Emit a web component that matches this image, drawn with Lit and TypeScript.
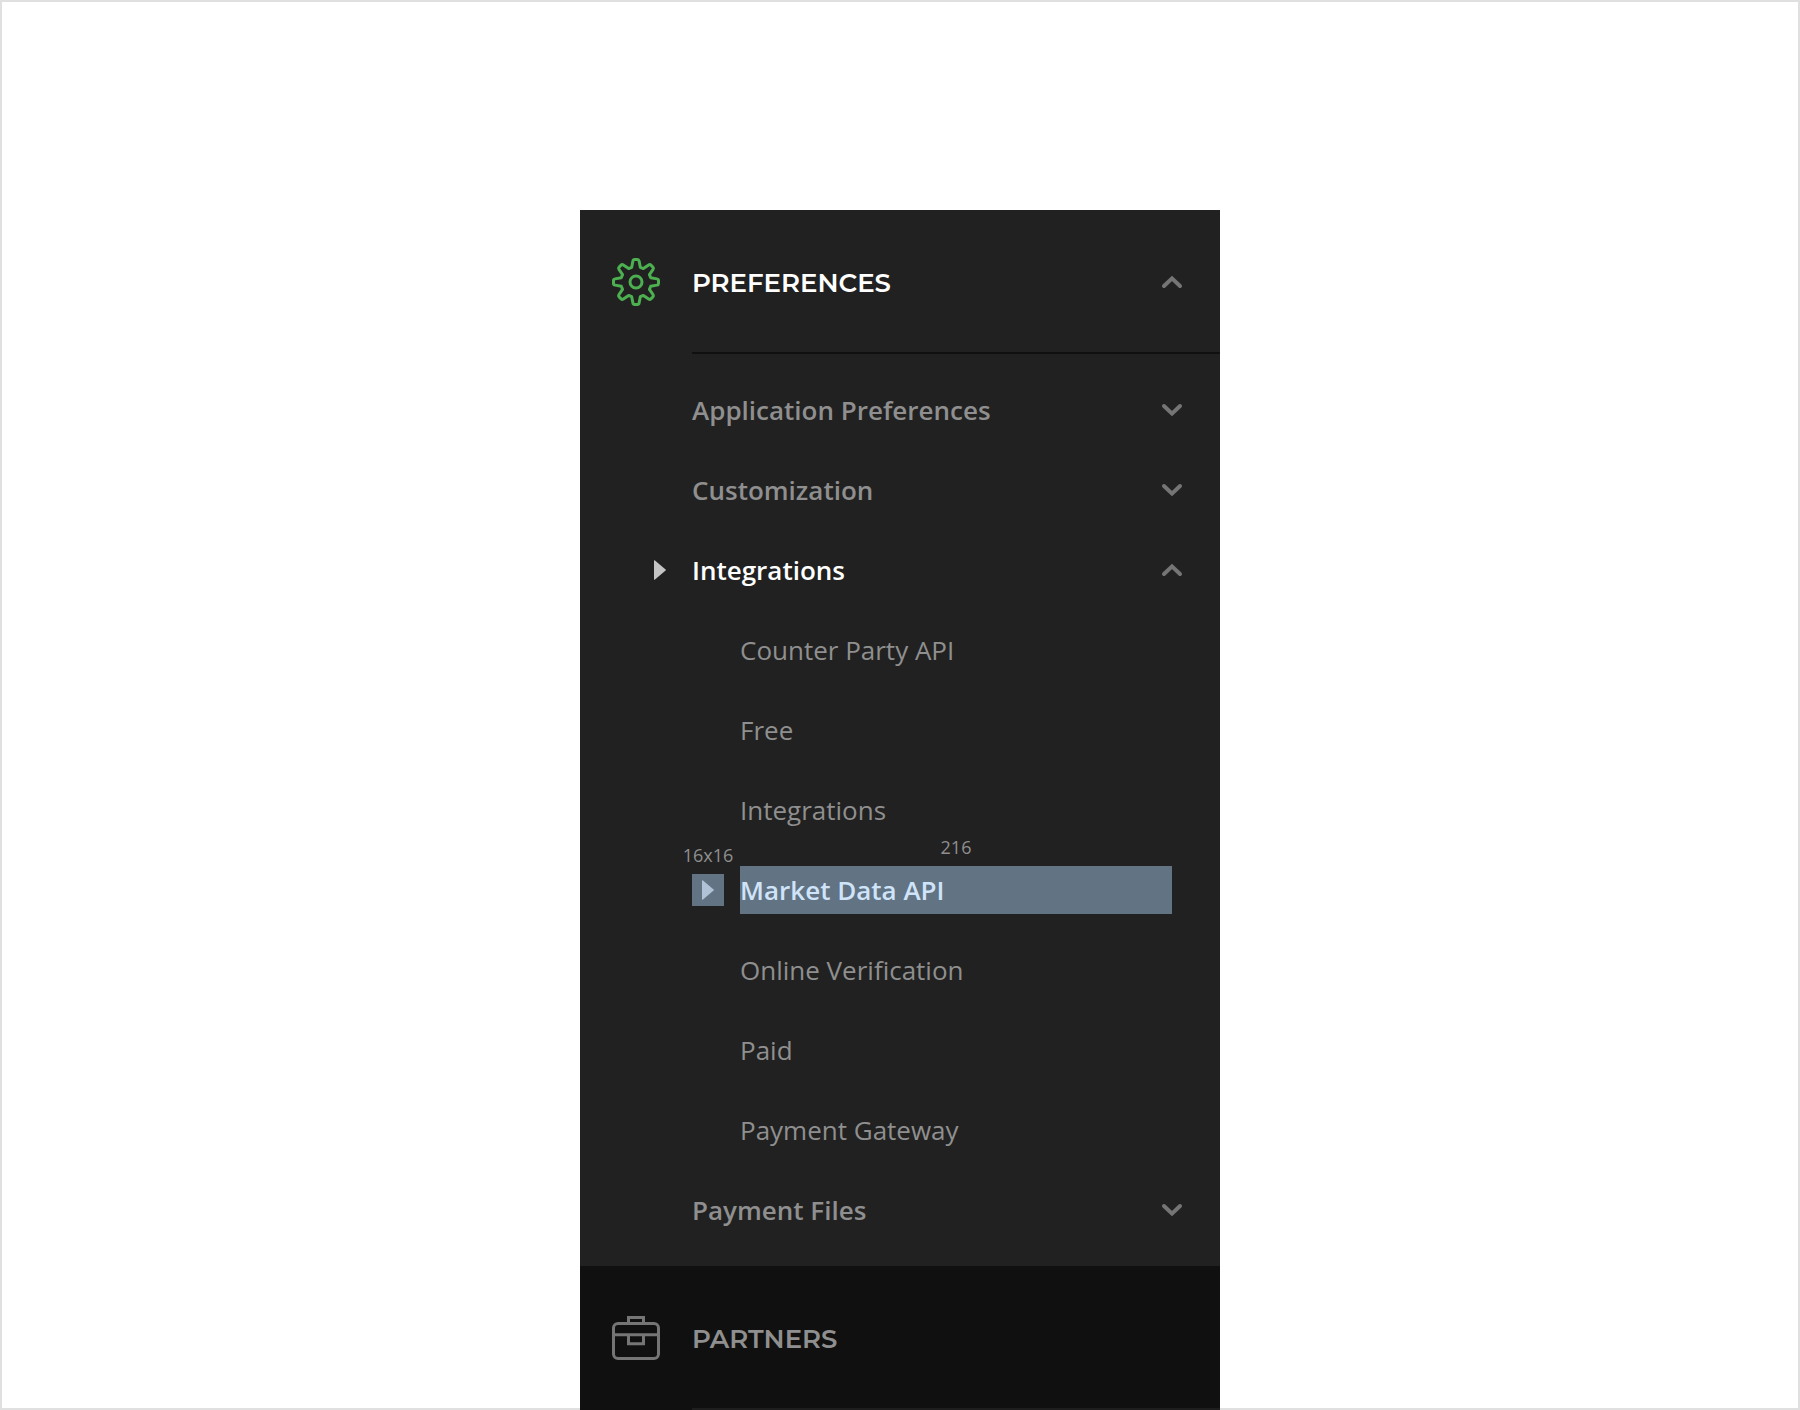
import { LitElement, html, css, svg, nothing } from "lit";
import { customElement, state } from "lit/decorators.js";
import { classMap } from "lit/directives/class-map.js";

interface MenuGroup {
  label: string;
  items: string[];
}

const groups: MenuGroup[] = [
  { label: "Application Preferences", items: [] },
  { label: "Customization", items: [] },
  {
    label: "Integrations",
    items: [
      "Counter Party API",
      "Free",
      "Integrations",
      "Market Data API",
      "Online Verification",
      "Paid",
      "Payment Gateway",
    ],
  },
  { label: "Payment Files", items: [] },
];

/** Outline of an eight-toothed gear centred in a 48-unit box. */
const gearOutline = (() => {
  const tooth = [
    [-4.3, -14.7],
    [-3.1, -21],
    [-2.8, -22.5],
    [-1.4, -22.5],
    [1.4, -22.5],
    [2.8, -22.5],
    [3.1, -21],
    [4.3, -14.7],
  ];
  let d = "";
  for (let i = 0; i < 8; i++) {
    const a = (i * Math.PI) / 4;
    const p = tooth.map(([x, y]) => {
      const px = 24 + x * Math.cos(a) - y * Math.sin(a);
      const py = 24 + x * Math.sin(a) + y * Math.cos(a);
      return `${px.toFixed(2)} ${py.toFixed(2)}`;
    });
    d += `${i ? "L" : "M"}${p[0]}L${p[1]}Q${p[2]} ${p[3]}L${p[4]}Q${p[5]} ${p[6]}L${p[7]}`;
  }
  return d + "Z";
})();

const gearIcon = html`<svg class="icon gear" viewBox="0 0 48 48" aria-hidden="true">
  ${svg`<path d=${gearOutline} /><circle cx="24" cy="24" r="6" />`}
</svg>`;

const briefcaseIcon = html`<svg class="icon" viewBox="0 0 48 48" aria-hidden="true">
  <rect x="1.5" y="9.5" width="45" height="35" rx="4.5" />
  <path d="M16.5 9.5V3.5H31.5V9.5M1.5 20.8H46.5M16.5 20.8V29.8H31.5V20.8" />
</svg>`;

const chevron = (up: boolean) => html`<svg class="chevron" viewBox="0 0 24 24" aria-hidden="true">
  <path d=${up ? "M4 16L12 8.4L20 16" : "M4 8L12 15.6L20 8"} />
</svg>`;

const arrow = html`<svg class="arrow" viewBox="0 0 12 20" aria-hidden="true">
  <path d="M0 0.8Q0 -0.4 1 0.6L11.6 9.4Q12.3 10 11.6 10.6L1 19.4Q0 20.4 0 19.2Z" />
</svg>`;

@customElement("app-root")
export class AppRoot extends LitElement {
  @state() private sectionOpen = true;
  @state() private openGroup = "Integrations";
  @state() private current = "Market Data API";

  static styles = css`
    :host {
      display: block;
      font-family: "Open Sans", "Noto Sans", sans-serif;
      --panel: #212121;
      --deep: #101010;
      --muted: #8f8f8f;
      --mark: #627384;
    }
    * {
      box-sizing: border-box;
    }
    .page {
      min-height: 100vh;
      padding-top: 210px;
      background: #ffffff;
      box-shadow: inset 0 0 0 2px #e0e0e0;
    }
    .panel {
      width: 640px;
      max-width: 100%;
      margin: 0 auto;
      background: var(--panel);
    }
    ul {
      list-style: none;
      margin: 0;
      padding: 0;
    }
    button {
      display: flex;
      align-items: center;
      width: 100%;
      margin: 0;
      border: 0;
      background: none;
      color: var(--muted);
      font: inherit;
      text-align: left;
      cursor: pointer;
    }
    h2 {
      margin: 0;
      font: inherit;
    }
    .section {
      height: 144px;
      gap: 32px;
      padding: 0 0 0 32px;
    }
    .title {
      display: flex;
      flex: 1;
      align-items: center;
      align-self: stretch;
      justify-content: space-between;
      padding: 2px 36px 0 0;
      border-bottom: 2px solid var(--deep);
      font: 600 26px/36px Montserrat, Inter, sans-serif;
    }
    .heading {
      padding-top: 2px;
    }
    .active {
      color: #ffffff;
    }
    .partners {
      background: var(--deep);
    }
    .partners .title {
      border-color: #1e1e1e;
    }
    .icon {
      flex: none;
      width: 48px;
      height: 48px;
      fill: none;
      stroke: #757575;
      stroke-width: 3;
    }
    .gear {
      stroke: #4caf50;
      stroke-linejoin: round;
    }
    .chevron {
      flex: none;
      width: 24px;
      height: 24px;
      fill: none;
      stroke: #757575;
      stroke-width: 4;
      stroke-linecap: round;
    }
    .groups {
      padding: 16px 0;
    }
    .group {
      height: 80px;
      padding: 0 36px 0 74px;
      font-size: 26px;
      font-weight: 600;
      line-height: 48px;
    }
    .marker {
      display: flex;
      flex: none;
      width: 38px;
    }
    .arrow {
      width: 12px;
      height: 20px;
      fill: #c4c4c4;
    }
    .label {
      flex: 1;
    }
    .item {
      display: flex;
      align-items: center;
      gap: 16px;
      height: 80px;
      padding: 0 48px 0 112px;
      color: var(--muted);
      font-size: 26px;
      line-height: 48px;
      text-decoration: none;
    }
    .slot {
      display: flex;
      position: relative;
      flex: none;
      align-items: center;
      justify-content: center;
      width: 32px;
      height: 32px;
    }
    .name {
      position: relative;
      flex: 1;
    }
    .current .slot,
    .current .name {
      background: var(--mark);
    }
    .current .name {
      color: #d0e4f9;
      font-weight: 600;
    }
    .current .arrow {
      fill: #afc2d6;
    }
    .size {
      position: absolute;
      bottom: 100%;
      left: 50%;
      padding-bottom: 6px;
      transform: translateX(-50%);
      color: var(--muted);
      font-size: 18px;
      font-weight: 400;
      line-height: 26px;
    }
  `;

  private renderItem(name: string) {
    const current = name === this.current;
    return html`<li>
      <a
        href="#"
        class=${classMap({ item: true, current })}
        aria-current=${current ? "page" : nothing}
        @click=${(e: Event) => {
          e.preventDefault();
          this.current = name;
        }}
      >
        <span class="slot">${current ? html`${arrow}<span class="size">16x16</span>` : nothing}</span>
        <span class="name">${name}${current ? html`<span class="size">216</span>` : nothing}</span>
      </a>
    </li>`;
  }

  private renderGroup(group: MenuGroup) {
    const open = group.label === this.openGroup;
    return html`<li>
      <button
        class=${classMap({ group: true, active: open })}
        aria-expanded=${open}
        @click=${() => (this.openGroup = open ? "" : group.label)}
      >
        <span class="marker">${open ? arrow : nothing}</span>
        <span class="label">${group.label}</span>
        ${chevron(open)}
      </button>
      ${open && group.items.length
        ? html`<ul>${group.items.map((item) => this.renderItem(item))}</ul>`
        : nothing}
    </li>`;
  }

  render() {
    return html`<main class="page">
      <nav class="panel">
        <h2>
          <button
            class=${classMap({ section: true, active: this.sectionOpen })}
            aria-expanded=${this.sectionOpen}
            @click=${() => (this.sectionOpen = !this.sectionOpen)}
          >
            ${gearIcon}
            <span class="title"><span class="heading">PREFERENCES</span>${chevron(this.sectionOpen)}</span>
          </button>
        </h2>
        ${this.sectionOpen
          ? html`<ul class="groups">${groups.map((g) => this.renderGroup(g))}</ul>`
          : nothing}
        <h2>
          <button class="section partners">
            ${briefcaseIcon}
            <span class="title"><span class="heading">PARTNERS</span></span>
          </button>
        </h2>
      </nav>
    </main>`;
  }
}
